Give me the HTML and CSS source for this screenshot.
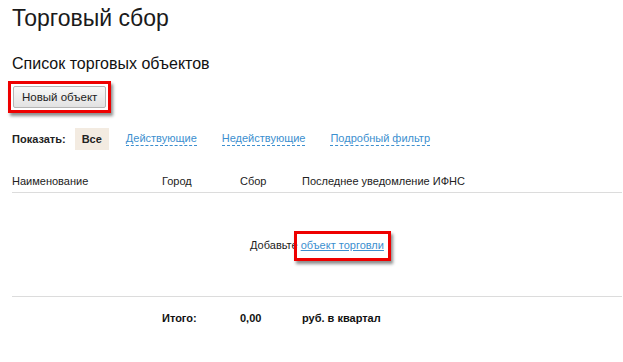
FILE: index.html
```html
<!DOCTYPE html>
<html lang="ru">
<head>
  <meta charset="UTF-8">
  <title>Торговый сбор</title>
  <link rel="stylesheet" href="styles.css">
</head>
<body>
  <div class="page">
    <h1>Торговый сбор</h1>

    <h2>Список торговых объектов</h2>

    <div class="actions">
      <span class="marker">
        <button class="btn">Новый объект</button>
      </span>
    </div>

    <div class="filter">
      <span class="filter-label">Показать:</span>
      <span class="filter-item active">Все</span>
      <a class="filter-item dashed" href="#">Действующие</a>
      <a class="filter-item dashed" href="#">Недействующие</a>
      <a class="filter-item dashed" href="#">Подробный фильтр</a>
    </div>

    <div class="table">
      <div class="row head">
        <div>Наименование</div>
        <div>Город</div>
        <div>Сбор</div>
        <div>Последнее уведомление ИФНС</div>
      </div>

      <div class="empty">
        Добавьте <a class="add-link" href="#">объект торговли<span class="marker-box"></span></a>
      </div>

      <div class="row total">
        <div></div>
        <div>Итого:</div>
        <div>0,00</div>
        <div>руб. в квартал</div>
      </div>
    </div>
  </div>
</body>
</html>
```

FILE: styles.css
```css
body {
  margin: 0;
  padding: 0;
  background: #fff;
  font-family: 'Liberation Sans', Arial, sans-serif;
  color: #222;
}

.page {
  padding: 0 1px 0 12px;
}

h1 {
  margin: 0;
  padding-top: 5px;
  font-size: 23px;
  font-weight: normal;
  line-height: 27px;
  color: #1a1a1a;
}

h2 {
  margin: 22px 0 0;
  font-size: 16px;
  font-weight: normal;
  line-height: 19px;
  color: #111;
}

.actions {
  margin-top: 8px;
  margin-left: -4px;
}

.marker {
  display: inline-block;
  padding: 2px;
  border: 3px solid #ee0000;
  box-shadow: 2px 3px 3px rgba(0, 0, 0, 0.45);
}

.btn {
  display: block;
  height: 22px;
  padding: 0 8px;
  border: 1px solid #b5b5b5;
  border-radius: 2px;
  background: linear-gradient(#f8f8f8, #e2e2e2);
  font-family: 'Liberation Sans', Arial, sans-serif;
  font-size: 11.5px;
  color: #222;
}

.filter {
  display: flex;
  align-items: center;
  margin-top: 14px;
  height: 23px;
  font-size: 11px;
}

.filter-label {
  font-weight: bold;
  margin-right: 9px;
}

.filter-item {
  margin-right: 25px;
}

.filter-item.active {
  padding: 5px 7px;
  background: #f3ebe1;
  font-weight: bold;
  margin-right: 17px;
}

.dashed {
  color: #3c8fcf;
  text-decoration: none;
  border-bottom: 1px dashed #3c8fcf;
  line-height: 13px;
}

.table {
  margin-top: 25px;
  font-size: 11px;
}

.row {
  display: grid;
  grid-template-columns: 150px 78px 62px 1fr;
}

.row.head {
  padding-bottom: 5px;
  border-bottom: 1px solid #dcdcdc;
  color: #222;
}

.empty {
  height: 103px;
  border-bottom: 1px solid #dcdcdc;
  display: flex;
  align-items: center;
  justify-content: center;
  gap: 3px;
}

.add-link {
  position: relative;
  color: #3c8fcf;
  text-decoration: underline;
}

.marker-box {
  position: absolute;
  left: -7px;
  right: -7px;
  top: -8px;
  bottom: -10px;
  border: 3px solid #ee0000;
  box-shadow: 2px 3px 3px rgba(0, 0, 0, 0.45);
}

.row.total {
  margin-top: 15px;
  font-weight: bold;
  color: #111;
}
```
